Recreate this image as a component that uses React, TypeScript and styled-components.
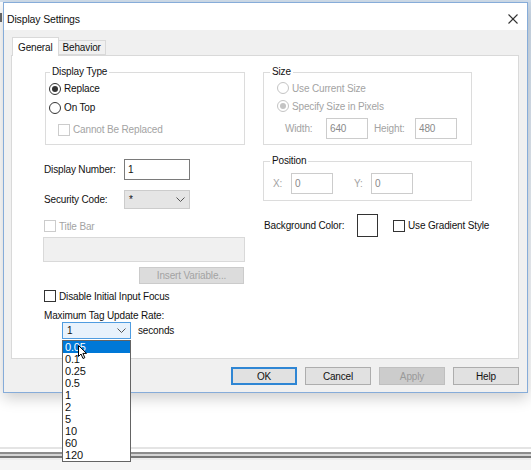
import React from "react";
import styled, { createGlobalStyle } from "styled-components";

const GlobalStyle = createGlobalStyle`
  html, body { margin: 0; padding: 0; background: #ffffff; }
  body { font-family: "Liberation Sans", Arial, sans-serif; font-size: 10px; color: #111; letter-spacing: -0.15px; }
  * { box-sizing: border-box; }
`;

const Screen = styled.div`
  width: 531px;
  height: 470px;
  overflow: hidden;
  display: flex;
  flex-direction: column;
  background: #ffffff;
`;

const TopStrip = styled.div`
  height: 2px;
  flex: none;
  background: #d3e0ee;
`;

const WindowRow = styled.div`
  display: flex;
  height: 391px;
  flex: none;
`;

const LeftGutter = styled.div`
  width: 3px;
  flex: none;
  display: flex;
  flex-direction: column;
`;

const GutterMark = styled.div`
  margin-top: 11px;
  width: 2px;
  height: 9px;
  background: #6a6a6a;
`;

const RightGutter = styled.div`
  width: 3px;
  flex: none;
  background: linear-gradient(#cddbea, #e2eaf3 40%, #ffffff 100%);
`;

const Dialog = styled.div`
  width: 525px;
  height: 391px;
  flex: none;
  border: 1px solid #86acd9;
  background: #f0f0f0;
  display: flex;
  flex-direction: column;
  box-shadow: 0 5px 14px rgba(0, 0, 0, 0.2);
  position: relative;
  z-index: 1;
`;

const TitleBar = styled.div`
  height: 27px;
  flex: none;
  background: #ffffff;
  display: flex;
  align-items: center;
  justify-content: space-between;
  padding: 4px 9px 0 3px;
`;

const TitleText = styled.span`
  font-size: 10.5px;
`;

const DialogBody = styled.div`
  flex: 1;
  display: flex;
  flex-direction: column;
  padding: 7px 8px 7px 7px;
`;

const TabStrip = styled.div`
  height: 18px;
  flex: none;
  display: flex;
  align-items: flex-end;
  padding-left: 1px;
`;

const Tab = styled.div<{ $active?: boolean }>`
  height: ${(p) => (p.$active ? 19 : 15)}px;
  margin-bottom: ${(p) => (p.$active ? -1 : 0)}px;
  padding: 0 ${(p) => (p.$active ? 5 : 4)}px;
  display: flex;
  align-items: center;
  background: ${(p) => (p.$active ? "#ffffff" : "#f0f0f0")};
  border: 1px solid #d9d9d9;
  border-bottom: ${(p) => (p.$active ? "none" : "1px solid #d9d9d9")};
  border-left: ${(p) => (p.$active ? "1px solid #d9d9d9" : "none")};
  position: relative;
  z-index: ${(p) => (p.$active ? 2 : 1)};
`;

const Panel = styled.div`
  height: 304px;
  flex: none;
  background: #ffffff;
  border: 1px solid #d9d9d9;
  padding: 10px 0 0 32px;
  display: grid;
  grid-template-columns: 201px 209px;
  column-gap: 18px;
  align-items: start;
`;

const Column = styled.div`
  display: flex;
  flex-direction: column;
`;

const GroupBox = styled.fieldset<{ $ml?: number; $mt?: number; $pt: number; $pb: number }>`
  margin: ${(p) => p.$mt ?? 0}px 0 0 ${(p) => p.$ml ?? 0}px;
  padding: ${(p) => p.$pt}px 0 ${(p) => p.$pb}px 0;
  border: 1px solid #dcdcdc;
  min-width: 0;
`;

const Legend = styled.legend<{ $ml: number }>`
  margin-left: ${(p) => p.$ml}px;
  padding: 0 2px;
  line-height: 12px;
  font-size: 10px;
  color: #111;
`;

const OptionRow = styled.div<{ $h: number; $indent?: number; $mt?: number }>`
  display: flex;
  align-items: center;
  gap: 3px;
  height: ${(p) => p.$h}px;
  margin-left: ${(p) => p.$indent ?? 0}px;
  margin-top: ${(p) => p.$mt ?? 0}px;
`;

const Radio = styled.span<{ $checked?: boolean; $disabled?: boolean }>`
  width: 12px;
  height: 12px;
  flex: none;
  border-radius: 50%;
  border: 1px solid ${(p) => (p.$disabled ? "#c4c4c4" : "#333333")};
  background: #ffffff;
  display: flex;
  align-items: center;
  justify-content: center;
  &::after {
    content: "";
    width: 6px;
    height: 6px;
    border-radius: 50%;
    background: ${(p) => (p.$disabled ? "#c4c4c4" : "#333333")};
    display: ${(p) => (p.$checked ? "block" : "none")};
  }
`;

const Checkbox = styled.span<{ $disabled?: boolean }>`
  width: 12px;
  height: 12px;
  flex: none;
  border: 1px solid ${(p) => (p.$disabled ? "#cccccc" : "#333333")};
  background: #ffffff;
`;

const Text = styled.span<{ $disabled?: boolean; $w?: number; $ml?: number }>`
  color: ${(p) => (p.$disabled ? "#a3a3a3" : "#111111")};
  white-space: nowrap;
  margin-left: ${(p) => p.$ml ?? 0}px;
  ${(p) => (p.$w ? `width: ${p.$w}px; flex: none;` : "")}
`;

const FieldRow = styled.div<{ $h: number; $mt?: number; $ml?: number }>`
  display: flex;
  align-items: center;
  height: ${(p) => p.$h}px;
  margin-top: ${(p) => p.$mt ?? 0}px;
  margin-left: ${(p) => p.$ml ?? 0}px;
  flex: none;
`;

const EditBox = styled.div<{ $w: number; $h: number; $disabled?: boolean; $ml?: number }>`
  width: ${(p) => p.$w}px;
  height: ${(p) => p.$h}px;
  flex: none;
  margin-left: ${(p) => p.$ml ?? 0}px;
  border: 1px solid ${(p) => (p.$disabled ? "#cccccc" : "#7a7a7a")};
  background: #ffffff;
  color: ${(p) => (p.$disabled ? "#8a8a8a" : "#111111")};
  display: flex;
  align-items: center;
  padding-left: 3px;
`;

const TitleField = styled.div`
  width: 202px;
  height: 25px;
  margin: 4px 0 0 -1px;
  flex: none;
  background: #f0f0f0;
  border: 1px solid #d9d9d9;
`;

const InsertButton = styled.div`
  width: 105px;
  height: 17px;
  margin: 5px 1px 0 0;
  align-self: flex-end;
  flex: none;
  background: #dcdcdc;
  border: 1px solid #cbcbcb;
  color: #a3a3a3;
  display: flex;
  align-items: center;
  justify-content: center;
`;

const Combo = styled.div<{ $w: number; $h: number; $focus?: boolean; $ml?: number }>`
  width: ${(p) => p.$w}px;
  height: ${(p) => p.$h}px;
  margin-left: ${(p) => p.$ml ?? 0}px;
  flex: none;
  display: flex;
  align-items: center;
  justify-content: space-between;
  padding: 0 4px 0 4px;
  background: ${(p) => (p.$focus ? "#e8f2fc" : "#e5e5e5")};
  border: 1px solid ${(p) => (p.$focus ? "#4f9ce0" : "#cccccc")};
`;

const RateWrap = styled.div`
  position: relative;
  flex: none;
`;

const DropList = styled.div`
  position: absolute;
  top: 100%;
  left: 18px;
  width: 69px;
  height: 122px;
  margin-top: 1px;
  background: #ffffff;
  border: 1px solid #646464;
  z-index: 5;
  display: flex;
  flex-direction: column;
`;

const DropItem = styled.div<{ $selected?: boolean }>`
  height: 12px;
  line-height: 12px;
  font-size: 11px;
  padding-left: 2px;
  background: ${(p) => (p.$selected ? "#0078d7" : "transparent")};
  color: ${(p) => (p.$selected ? "#ffffff" : "#111111")};
`;

const Pointer = styled.svg`
  position: absolute;
  left: 15px;
  top: 4px;
  z-index: 6;
`;

const ColorSwatch = styled.div`
  width: 21px;
  height: 23px;
  flex: none;
  border: 1px solid #333333;
  background: #ffffff;
`;

const ButtonBar = styled.div`
  display: flex;
  justify-content: flex-end;
  gap: 8px;
  margin-top: 8px;
  flex: none;
`;

const DialogButton = styled.div<{ $variant?: "default" | "normal" | "disabled" }>`
  width: 66px;
  height: 18px;
  display: flex;
  align-items: center;
  justify-content: center;
  background: ${(p) => (p.$variant === "disabled" ? "#cccccc" : "#e1e1e1")};
  border: ${(p) =>
    p.$variant === "default"
      ? "2px solid #2f86d4"
      : p.$variant === "disabled"
      ? "1px solid #bfbfbf"
      : "1px solid #adadad"};
  color: ${(p) => (p.$variant === "disabled" ? "#9a9a9a" : "#111111")};
`;

const BottomChrome = styled.div`
  margin-top: 54px;
  height: 13px;
  flex: none;
  background: linear-gradient(
    #e4e4e4 0px,
    #e4e4e4 2px,
    #ffffff 2px,
    #ffffff 5px,
    #8c8c8c 5px,
    #8c8c8c 7px,
    #d4d4d4 7px,
    #d4d4d4 9px,
    #777777 9px,
    #777777 11px,
    #ececec 11px
  );
`;

const BottomFill = styled.div`
  flex: 1;
  background: #f5f5f5;
`;

const Chevron = ({ color = "#444" }: { color?: string }) => (
  <svg width="9" height="5" viewBox="0 0 9 5">
    <polyline points="0.5,0.5 4.5,4.5 8.5,0.5" fill="none" stroke={color} strokeWidth="1" />
  </svg>
);

const CloseIcon = () => (
  <svg width="10" height="10" viewBox="0 0 10 10">
    <line x1="0.5" y1="0.5" x2="9.5" y2="9.5" stroke="#333" strokeWidth="1.1" />
    <line x1="9.5" y1="0.5" x2="0.5" y2="9.5" stroke="#333" strokeWidth="1.1" />
  </svg>
);

const rates = ["0.05", "0.1", "0.25", "0.5", "1", "2", "5", "10", "60", "120"];

export default function App() {
  return (
    <>
      <GlobalStyle />
      <Screen>
        <TopStrip />
        <WindowRow>
          <LeftGutter>
            <GutterMark />
          </LeftGutter>
          <Dialog>
            <TitleBar>
              <TitleText>Display Settings</TitleText>
              <CloseIcon />
            </TitleBar>
            <DialogBody>
              <TabStrip>
                <Tab $active>General</Tab>
                <Tab>Behavior</Tab>
              </TabStrip>
              <Panel>
                <Column>
                  <GroupBox $ml={1} $pt={1} $pb={5}>
                    <Legend $ml={4}>Display Type</Legend>
                    <OptionRow $h={19} $indent={3}>
                      <Radio $checked />
                      <Text>Replace</Text>
                    </OptionRow>
                    <OptionRow $h={19} $indent={3}>
                      <Radio />
                      <Text>On Top</Text>
                    </OptionRow>
                    <OptionRow $h={19} $indent={12} $mt={3}>
                      <Checkbox $disabled />
                      <Text $disabled>Cannot Be Replaced</Text>
                    </OptionRow>
                  </GroupBox>

                  <FieldRow $h={21} $mt={14}>
                    <Text $w={80}>Display Number:</Text>
                    <EditBox $w={66} $h={21}>1</EditBox>
                  </FieldRow>
                  <FieldRow $h={19} $mt={10}>
                    <Text $w={80}>Security Code:</Text>
                    <Combo $w={66} $h={19}>
                      <span>*</span>
                      <Chevron color="#555" />
                    </Combo>
                  </FieldRow>
                  <OptionRow $h={14} $mt={10}>
                    <Checkbox $disabled />
                    <Text $disabled>Title Bar</Text>
                  </OptionRow>
                  <TitleField />
                  <InsertButton>Insert Variable...</InsertButton>
                  <OptionRow $h={14} $mt={5}>
                    <Checkbox />
                    <Text>Disable Initial Input Focus</Text>
                  </OptionRow>
                  <FieldRow $h={12} $mt={6}>
                    <Text>Maximum Tag Update Rate:</Text>
                  </FieldRow>
                  <FieldRow $h={17} $mt={1}>
                    <RateWrap>
                      <Combo $w={69} $h={17} $focus $ml={18}>
                        <span>1</span>
                        <Chevron color="#555" />
                      </Combo>
                      <DropList>
                        {rates.map((r, i) => (
                          <DropItem key={r} $selected={i === 0}>
                            {r}
                          </DropItem>
                        ))}
                        <Pointer width="10" height="15" viewBox="0 0 10 15">
                          <path
                            d="M0.5 0.5 L0.5 11.5 L3 9 L5 13.5 L6.8 12.7 L4.9 8.4 L8.5 8.4 Z"
                            fill="#ffffff"
                            stroke="#000000"
                            strokeWidth="1"
                            strokeLinejoin="round"
                          />
                        </Pointer>
                      </DropList>
                    </RateWrap>
                    <Text $ml={7}>seconds</Text>
                  </FieldRow>
                </Column>

                <Column>
                  <GroupBox $pt={1} $pb={5}>
                    <Legend $ml={6}>Size</Legend>
                    <OptionRow $h={18} $indent={13}>
                      <Radio $disabled />
                      <Text $disabled>Use Current Size</Text>
                    </OptionRow>
                    <OptionRow $h={18} $indent={13}>
                      <Radio $disabled $checked />
                      <Text $disabled>Specify Size in Pixels</Text>
                    </OptionRow>
                    <FieldRow $h={21} $mt={3} $ml={21}>
                      <Text $disabled $w={41}>Width:</Text>
                      <EditBox $w={42} $h={21} $disabled>640</EditBox>
                      <Text $disabled $w={41} $ml={6}>
                        Height:
                      </Text>
                      <EditBox $w={42} $h={21} $disabled>480</EditBox>
                    </FieldRow>
                  </GroupBox>

                  <GroupBox $mt={10} $pt={6} $pb={6}>
                    <Legend $ml={6}>Position</Legend>
                    <FieldRow $h={21} $ml={9}>
                      <Text $disabled $w={18}>X:</Text>
                      <EditBox $w={42} $h={21} $disabled>0</EditBox>
                      <Text $disabled $w={17} $ml={21}>
                        Y:
                      </Text>
                      <EditBox $w={42} $h={21} $disabled>0</EditBox>
                    </FieldRow>
                  </GroupBox>

                  <FieldRow $h={23} $mt={13} $ml={1}>
                    <Text $w={93}>Background Color:</Text>
                    <ColorSwatch />
                    <OptionRow $h={14} $indent={15}>
                      <Checkbox />
                      <Text>Use Gradient Style</Text>
                    </OptionRow>
                  </FieldRow>
                </Column>
              </Panel>
              <ButtonBar>
                <DialogButton $variant="default">OK</DialogButton>
                <DialogButton>Cancel</DialogButton>
                <DialogButton $variant="disabled">Apply</DialogButton>
                <DialogButton>Help</DialogButton>
              </ButtonBar>
            </DialogBody>
          </Dialog>
          <RightGutter />
        </WindowRow>
        <BottomChrome />
        <BottomFill />
      </Screen>
    </>
  );
}
